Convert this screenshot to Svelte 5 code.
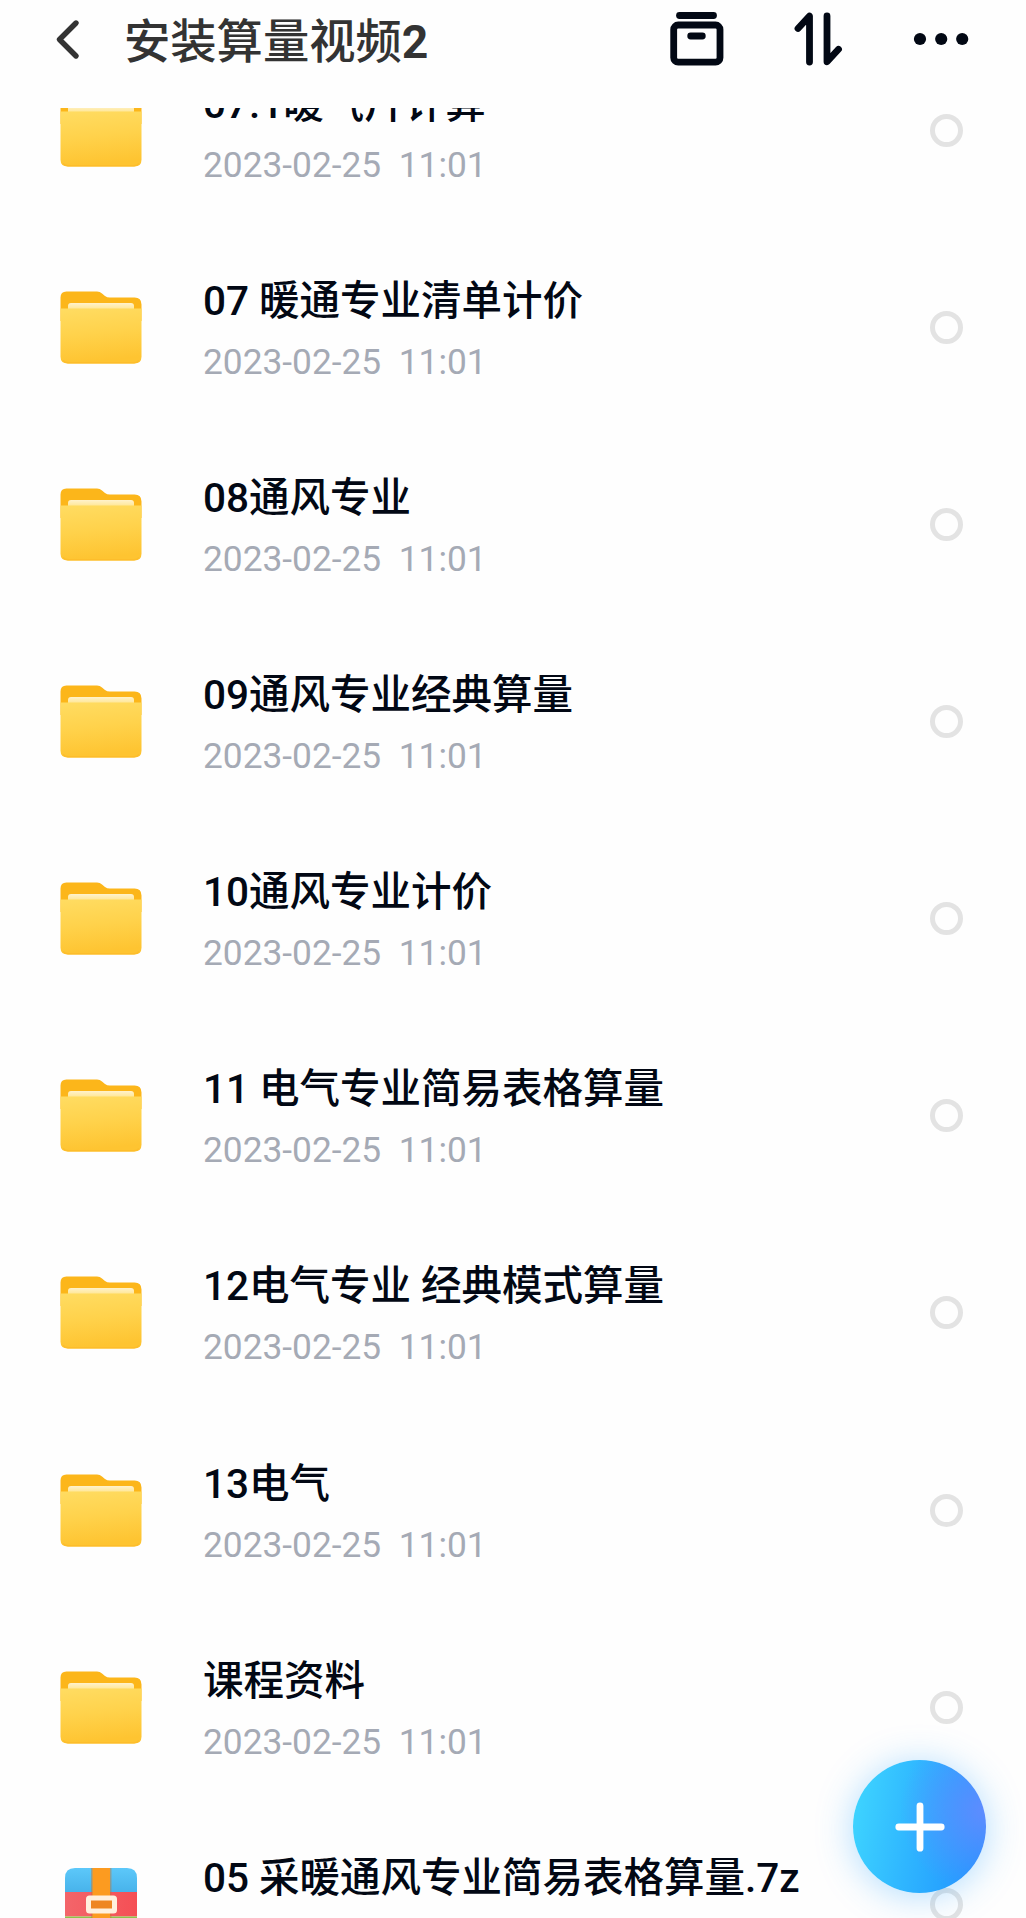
<script>
  const date = '2023-02-25  11:01'

  const files = [
    { name: '07.1暖气片计算', type: 'folder' },
    { name: '07 暖通专业清单计价', type: 'folder' },
    { name: '08通风专业', type: 'folder' },
    { name: '09通风专业经典算量', type: 'folder' },
    { name: '10通风专业计价', type: 'folder' },
    { name: '11 电气专业简易表格算量', type: 'folder' },
    { name: '12电气专业 经典模式算量', type: 'folder' },
    { name: '13电气', type: 'folder' },
    { name: '课程资料', type: 'folder' },
    { name: '05 采暖通风专业简易表格算量.7z', type: 'archive' },
  ]

  let selected = $state([])

  const toggle = (name) => {
    selected = selected.includes(name)
      ? selected.filter((n) => n !== name)
      : [...selected, name]
  }
</script>

<svg class="defs" width="0" height="0">
  <defs>
    <linearGradient id="front" x1="0" y1="0" x2="0.15" y2="1">
      <stop offset="0" stop-color="#ffdc62" />
      <stop offset="0.5" stop-color="#ffd24b" />
      <stop offset="1" stop-color="#fec431" />
    </linearGradient>
    <linearGradient id="paper" x1="0" y1="0" x2="0" y2="1">
      <stop offset="0" stop-color="#fff2cc" />
      <stop offset="1" stop-color="#ffdf70" />
    </linearGradient>
    <linearGradient id="blue" x1="0" y1="0" x2="0" y2="1">
      <stop offset="0" stop-color="#5cc8fa" />
      <stop offset="1" stop-color="#47b2ea" />
    </linearGradient>
    <linearGradient id="red" x1="0" y1="0" x2="1" y2="0">
      <stop offset="0" stop-color="#f3656a" />
      <stop offset="1" stop-color="#f54f55" />
    </linearGradient>
  </defs>
</svg>

<div class="page">
  <header>
    <button class="back" aria-label="back">
      <svg width="30" height="46" viewBox="0 0 30 46">
        <path d="M23 7 L6.5 23.5 L23 40" />
      </svg>
    </button>
    <h1>安装算量视频<b>2</b></h1>
    <div class="tools">
      <button aria-label="transfer">
        <svg width="54" height="54" viewBox="0 0 54 54">
          <path d="M9.5 3.5 H43.5" />
          <rect x="3.7" y="13" width="46.3" height="37.2" rx="4.5" />
          <path d="M20.7 24 H32.3" />
        </svg>
      </button>
      <button aria-label="sort">
        <svg width="50" height="54" viewBox="0 0 50 54">
          <path d="M5 16.5 L16.5 4 V50" />
          <path d="M34 4 V49.8 L45.5 37.3" />
        </svg>
      </button>
      <button aria-label="more">
        <svg class="dots" width="56" height="14" viewBox="0 0 56 14">
          <circle cx="7" cy="7" r="6.1" />
          <circle cx="28.2" cy="7" r="6.1" />
          <circle cx="49.2" cy="7" r="6.1" />
        </svg>
      </button>
    </div>
  </header>

  <main>
    <ul>
      {#each files as file}
        <li>
          <div class="icon">
            {#if file.type === 'folder'}
              <svg width="82" height="73" viewBox="0 0 82 73">
                <path
                  fill="#fcb61a"
                  d="M0.5 30 V6.5 Q0.5 0.5 6.5 0.5 H37 Q40 0.5 42 2.5 L45 5 Q47 6.5 50 6.5 H74.5 Q81.5 6.5 81.5 13.5 V30 Z"
                />
                <path fill="url(#paper)" d="M8 22 V15 Q8 12 11 12 H71 Q74 12 74 15 V22 Z" />
                <path
                  fill="url(#front)"
                  d="M0.5 17.5 H81.5 V65.5 Q81.5 72.5 74.5 72.5 H7.5 Q0.5 72.5 0.5 65.5 Z"
                />
                <path
                  fill="none"
                  stroke="#fdbd2b"
                  stroke-width="1.5"
                  d="M3 69.5 Q5 71.7 8 71.7 H74 Q77 71.7 79 69.5"
                />
              </svg>
            {:else}
              <svg width="72" height="73" viewBox="0 0 72 73">
                <path fill="url(#blue)" d="M0 25 V10 Q0 0 10 0 H62 Q72 0 72 10 V25 Z" />
                <path fill="url(#red)" d="M0 24 H72 V48.5 H0 Z" />
                <path fill="#8fc34a" d="M0 48.5 H72 V63 Q72 73 62 73 H10 Q0 73 0 63 Z" />
                <rect x="26" y="0" width="20.5" height="73" fill="#c8762d" opacity="0.45" />
                <rect x="27.5" y="0" width="17.5" height="73" fill="#fc9b20" />
                <rect
                  x="23.5"
                  y="30"
                  width="26"
                  height="13"
                  rx="1"
                  fill="#ee8623"
                  stroke="#fff0de"
                  stroke-width="5"
                />
              </svg>
            {/if}
          </div>
          <div class="info">
            <div class="name">{file.name}</div>
            <div class="date">{date}</div>
          </div>
          <button
            class="check"
            class:checked={selected.includes(file.name)}
            aria-label="select"
            onclick={() => toggle(file.name)}
          ></button>
        </li>
      {/each}
    </ul>
  </main>

  <button class="add" aria-label="add">
    <svg width="50" height="50" viewBox="0 0 50 50">
      <path d="M25 3.8 V46.2 M3.8 25 H46.2" />
    </svg>
  </button>
</div>

<style>
  :global(body) {
    margin: 0;
    background: #fefefe;
  }

  .defs {
    position: absolute;
  }

  .page {
    position: relative;
    width: 1026px;
    height: 1918px;
    overflow: hidden;
    display: flex;
    flex-direction: column;
    font-family: Roboto, 'Noto Sans CJK SC', sans-serif;
    background: #fefefe;
  }

  button {
    display: block;
    padding: 0;
    border: 0;
    background: none;
  }

  button svg {
    display: block;
    fill: none;
    stroke: #020814;
    stroke-width: 6.8;
    stroke-linecap: round;
    stroke-linejoin: round;
  }

  header {
    box-sizing: border-box;
    flex: none;
    height: 108px;
    padding: 0 57.5px 30px 53px;
    display: flex;
    align-items: center;
  }

  .back svg {
    stroke: #333;
    stroke-width: 5.4;
  }

  h1 {
    flex: 1;
    margin: 0 0 0 41px;
    padding-top: 6px;
    font-size: 46.3px;
    line-height: 60px;
    font-weight: 500;
    color: #333;
    white-space: nowrap;
  }

  h1 b {
    font-weight: 700;
  }

  .tools {
    display: flex;
    align-items: center;
  }

  .tools button + button {
    margin-left: 69.5px;
  }

  .tools .dots {
    fill: #020814;
    stroke: none;
  }

  main {
    flex: 1;
    overflow: hidden;
  }

  /* list is scrolled part way into the first row */
  ul {
    margin: -76.5px 0 0;
    padding: 0;
    list-style: none;
  }

  li {
    box-sizing: border-box;
    height: 197.15px;
    padding: 0 63px 0 60px;
    display: flex;
    align-items: center;
  }

  .icon {
    width: 82px;
    display: flex;
    justify-content: center;
  }

  .icon svg {
    display: block;
  }

  .info {
    flex: 1;
    margin-left: 61px;
    padding-top: 6px;
    white-space: pre;
  }

  .name {
    font-size: 40.5px;
    line-height: 44px;
    font-weight: 500;
    color: #020814;
  }

  .date {
    font-size: 35.3px;
    line-height: 40px;
    color: #a5aab5;
  }

  .check {
    box-sizing: border-box;
    width: 33px;
    height: 33px;
    border: 5px solid #e3e3e3;
    border-radius: 50%;
  }

  .checked {
    border-color: #2f9dff;
  }

  .add {
    position: absolute;
    right: 40px;
    bottom: 25px;
    width: 133px;
    height: 133px;
    display: flex;
    align-items: center;
    justify-content: center;
    border-radius: 50%;
    background:
      radial-gradient(circle at 100% 38%, #5f8cff 0, rgba(95, 140, 255, 0) 55%),
      linear-gradient(100deg, #3ed4ff 5%, #2fb6ff 45%, #2196ff 90%);
    box-shadow: 0 3px 36px rgba(50, 165, 255, 0.38);
  }

  .add svg {
    stroke: #fff;
  }
</style>
